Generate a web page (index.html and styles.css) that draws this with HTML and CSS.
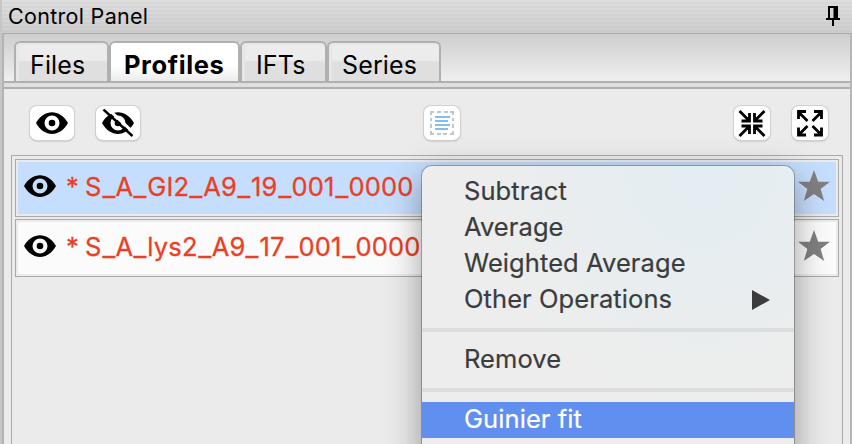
FILE: index.html
```html
<!DOCTYPE html>
<html lang="en">
<head>
<meta charset="utf-8">
<title>Control Panel</title>
<link rel="stylesheet" href="styles.css">
</head>
<body>
<svg class="defs" aria-hidden="true">
  <symbol id="eye" viewBox="0 0 32 22"><path fill-rule="evenodd" d="M0 11C8-3.500 24-3.500 32 11C24 25.500 8 25.500 0 11ZM16 3.500a7.500 7.500 0 1 0 0 15a7.500 7.500 0 0 0 0-15Z"/><circle cx="16" cy="11" r="3.300"/></symbol>
  <symbol id="star" viewBox="0 0 32 31"><path d="M16 0l4.200 11.800H32l-9.400 7.300L26.200 31 16 24 5.800 31l3.600-11.900L0 11.800h11.800Z"/></symbol>
</svg>
<div class="window">
  <header class="titlebar"><span class="title">Control Panel</span>
    <svg class="pin" width="14" height="20" viewBox="0 0 14 20"><path d="M3 13V1h8v12M0 13h14M7 13v7" fill="none" stroke="#000" stroke-width="2"/><path d="M7.500 1H12v12H7.500z"/></svg>
  </header>
  <main class="panel">
    <nav class="tabs">
      <div class="tab files"><span>Files</span></div>
      <div class="tab active"><span>Profiles</span></div>
      <div class="tab ifts"><span>IFTs</span></div>
      <div class="tab series"><span>Series</span></div>
    </nav>
    <div class="tabline"></div>
    <div class="toolbar">
      <button class="wide"><svg width="32" height="22"><use href="#eye"/></svg></button>
      <button class="wide"><svg width="32" height="28" viewBox="0 0 32 28"><use href="#eye" y="3" width="32" height="22"/><path d="M4-2L34 26" stroke="#fff" stroke-width="3"/><path d="M1.500.500L30.500 27" stroke="#000" stroke-width="2.400"/></svg></button>
      <button class="mid"><svg width="24" height="24" viewBox="0 0 24 24" fill="none"><path d="M1 4V1h3M7 1h4M14 1h4M20 1h3v3M23 7v3M23 13v4M23 20v3h-3M17 23h-4M11 23H7M4 23H1v-3M1 17v-4M1 10V7" stroke="#bdc7cd" stroke-width="2"/><path d="M5 6h15M5 10h13M5 14h15M5 18h13" stroke="#82bdf2" stroke-width="2"/></svg></button>
      <button class="collapse"><svg width="28" height="28" viewBox="0 0 28 28"><path d="M1.500 2l9 9M11.500 4v8h-8M26.500 2l-9 9M16.500 4v8h8M1.500 27l9-9M11.500 25v-8h-8M26.500 27l-9-9M16.500 25v-8h8"/></svg></button>
      <button><svg width="28" height="28" viewBox="0 0 28 28"><path d="M11.500 12l-9-9M2.500 10V2.500H10M16.500 12l9-9M18 2.500h7.500V10M11.500 17l-9 9M2.500 18.500V26H10M16.500 17l9 9M18 26h7.500v-7.500"/></svg></button>
    </div>
    <section class="list">
      <div class="row selected"><div class="fill"><svg class="eye" width="32" height="22"><use href="#eye"/></svg><span class="asterisk">*</span><span class="name">S<i>_</i>A<i>_</i>GI2<i>_</i>A9<i>_</i>19<i>_</i>001<i>_</i>0000</span><svg class="star" width="32" height="31"><use href="#star"/></svg></div></div>
      <div class="row"><div class="fill"><svg class="eye" width="32" height="22"><use href="#eye"/></svg><span class="asterisk">*</span><span class="name">S<i>_</i>A<i>_</i>lys2<i>_</i>A9<i>_</i>17<i>_</i>001<i>_</i>0000</span><svg class="star" width="32" height="31"><use href="#star"/></svg></div></div>
    </section>
  </main>
</div>
<div class="menu">
  <div class="item"><span>Subtract</span></div>
  <div class="item"><span>Average</span></div>
  <div class="item"><span>Weighted Average</span></div>
  <div class="item"><span>Other Operations</span><svg width="18" height="20"><path d="M0 0l18 10L0 20z"/></svg></div>
  <hr>
  <div class="item"><span>Remove</span></div>
  <hr>
  <div class="item highlighted"><span>Guinier fit</span></div>
</div>
</body>
</html>
```
FILE: styles.css
```css
* { box-sizing: border-box; }
body { margin: 0; width: 852px; height: 444px; overflow: hidden; font-family: Inter, sans-serif; background: #ebebeb; }
.defs { position: absolute; width: 0; height: 0; }
span { white-space: pre; }
.window { height: 444px; display: flex; flex-direction: column; border-left: 2px solid #c6c6c6; }
.titlebar { height: 34px; display: flex; justify-content: space-between; padding: 0 12px 0 6px; background: repeating-linear-gradient(transparent 0 2px, rgba(0,0,0,.025) 2px 4px), linear-gradient(#dedede, #cecece); }
.title { font-size: 21.500px; line-height: 33px; letter-spacing: .3px; }
.pin { margin-top: 6px; }
.panel { flex: 1; border: 1px solid #aaa; border-left: 2px solid #b4b4b4; border-right: 2px solid #b5b5b5; border-bottom: 0; }
.tabs { height: 47px; display: flex; align-items: flex-end; padding-left: 10px; background: linear-gradient(#cecece, #efefef); }
.tab { height: 40px; border: 2px solid #b0b0b0; border-bottom: 0; border-radius: 6px 6px 0 0; background: linear-gradient(#ececec 0 45%, #dfdfdf 50%); box-shadow: inset 3px 2px #e7e7e7; font-size: 25px; line-height: 45px; letter-spacing: .15px; }
.files { width: 95px; padding-left: 14px; }
.active { width: 131px; padding-left: 13px; background: linear-gradient(#fff 60%, #ececec); box-shadow: none; font-weight: 700; font-size: 25.500px; line-height: 43px; letter-spacing: .6px; }
.ifts { width: 87px; padding-left: 14px; }
.series { width: 114px; padding-left: 13px; }
.tabline { height: 8px; border-top: 2px solid #b0b0b0; border-bottom: 2px solid #b0b0b0; background: #dfdfdf; }
.toolbar { height: 66px; display: flex; align-items: flex-start; padding: 17px 20px 0 26px; }
button { width: 36px; height: 34px; padding: 0; border: 0; border-radius: 7px; background: #fff; box-shadow: 0 0 0 1px #d0d0d0, 0 1px 2px #999; display: flex; align-items: center; justify-content: center; flex: none; }
button + button { margin-left: 22px; }
button.wide { width: 44px; }
button.mid { margin-left: 284px; }
button.collapse { margin-left: 274px; }
button:not(.wide):not(.mid) path { fill: none; stroke: #000; stroke-width: 2.800; }
.list { height: 300px; margin: 0 7px; border: 1px solid #aaa; padding: 3px; }
.row { height: 58px; margin-bottom: 2px; border: 1px solid #aaa; padding: 2px; }
.fill { height: 52px; display: flex; align-items: center; background: #fbfbfb; color: #eb3f25; font-size: 25.500px; padding: 0 6px; }
.fill span { margin-top: -4px; -webkit-text-stroke: .3px #eb3f25; }
.selected .fill { background: #c6defd; }
.eye { fill: #000; margin-top: -5px; flex: none; }
.asterisk { width: 11px; margin-left: 10px; }
.name { margin-left: 8px; letter-spacing: .17px; }
.name i { display: inline-block; width: 14px; font-style: normal; text-align: center; transform: scaleX(1.1); }
.star { fill: #808080; margin: -6px 0 0 auto; flex: none; }
.menu { position: absolute; left: 422px; top: 166px; width: 372px; height: 300px; padding-top: 8px; border-radius: 10px 10px 0 0; background: radial-gradient(ellipse at 75% 0, #e3edf2, #ededed 55%); box-shadow: 0 0 0 1px rgba(0,0,0,.25), 0 10px 35px rgba(0,0,0,.38); color: #3b3c3d; }
.item { height: 36px; display: flex; align-items: center; justify-content: space-between; padding: 0 24px 0 42px; font-size: 25.500px; line-height: 34px; letter-spacing: .08px; }
.item span { margin-top: -2px; -webkit-text-stroke: .2px; }
.item svg { fill: #3b3c3d; }
.menu hr { height: 4px; margin: 10px 0; border: 0; background: #dcdddd; }
.highlighted { background: #608ff0; color: #fff; }
```
